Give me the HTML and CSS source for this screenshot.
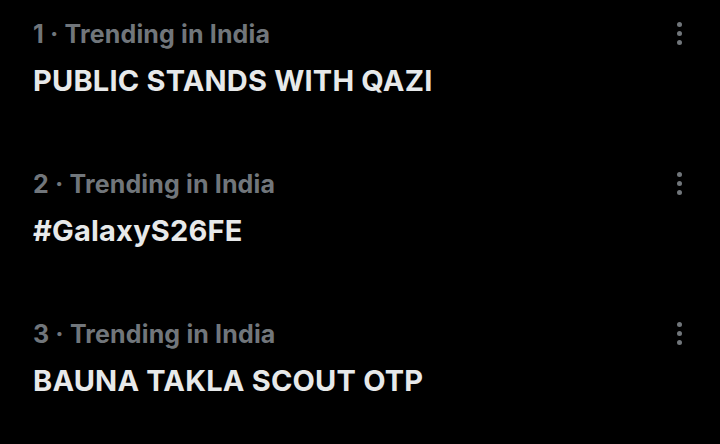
FILE: index.html
```html
<!DOCTYPE html>
<html>
<head>
<meta charset="utf-8">
<link rel="stylesheet" href="styles.css">
</head>
<body>
<div class="list">
  <div class="trend">
    <div class="text">
      <div class="meta">1 · Trending in India</div>
      <div class="title">PUBLIC STANDS WITH QAZI</div>
    </div>
    <div class="more"><span></span><span></span><span></span></div>
  </div>
  <div class="trend">
    <div class="text">
      <div class="meta">2 · Trending in India</div>
      <div class="title">#GalaxyS26FE</div>
    </div>
    <div class="more"><span></span><span></span><span></span></div>
  </div>
  <div class="trend">
    <div class="text">
      <div class="meta">3 · Trending in India</div>
      <div class="title">BAUNA TAKLA SCOUT OTP</div>
    </div>
    <div class="more"><span></span><span></span><span></span></div>
  </div>
</div>
</body>
</html>
```
FILE: styles.css
```css
html, body {
  margin: 0;
  padding: 0;
  background: #000;
  width: 720px;
  height: 444px;
  overflow: hidden;
}
body {
  font-family: Inter, "Noto Sans", sans-serif;
}
.list {
  display: flex;
  flex-direction: column;
}
.trend {
  height: 150px;
  display: flex;
  justify-content: space-between;
  align-items: flex-start;
  padding: 18px 0 0 33px;
  box-sizing: border-box;
}
.meta {
  color: #71767b;
  font-size: 25px;
  font-weight: 700;
  line-height: 32px;
  letter-spacing: 0.15px;
}
.title {
  color: #e7e9ea;
  font-size: 29px;
  font-weight: 700;
  line-height: 36px;
  margin-top: 13px;
  letter-spacing: 0.2px;
}
.more {
  display: flex;
  flex-direction: column;
  gap: 4px;
  margin: 4px 38px 0 0;
}
.more span {
  width: 5px;
  height: 5px;
  border-radius: 50%;
  background: #71767b;
}
```
